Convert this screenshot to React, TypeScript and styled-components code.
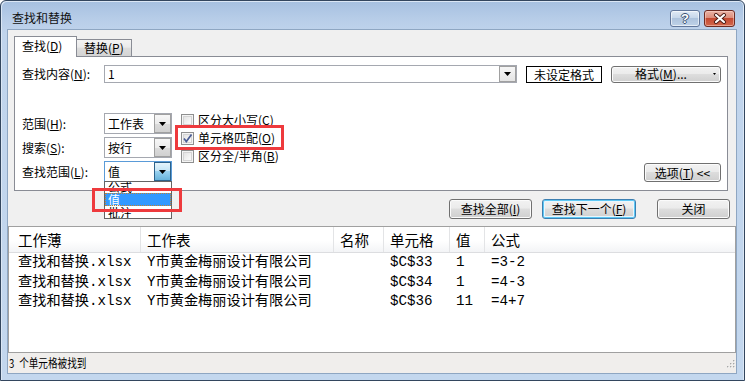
import React from 'react';
import styled, { createGlobalStyle, css } from 'styled-components';

const UI_FONT = `"Noto Sans CJK SC", "Liberation Sans", sans-serif`;
const LIST_FONT = `"Liberation Mono", "Noto Sans CJK SC", monospace`;
const COLUMNS = '132px 193px 50px 66px 35px 1fr';

const GlobalStyle = createGlobalStyle`
  * { box-sizing: border-box; }
  html, body { margin: 0; padding: 0; background: #ffffff; }
  body { font-family: ${UI_FONT}; font-size: 12px; color: #000; }
`;

const results = [
  { book: '查找和替换.xlsx', sheet: 'Y市黄金梅丽设计有限公司', name: '', cell: '$C$33', value: '1', formula: '=3-2' },
  { book: '查找和替换.xlsx', sheet: 'Y市黄金梅丽设计有限公司', name: '', cell: '$C$34', value: '1', formula: '=4-3' },
  { book: '查找和替换.xlsx', sheet: 'Y市黄金梅丽设计有限公司', name: '', cell: '$C$36', value: '11', formula: '=4+7' },
];

function Arrow() {
  return (
    <svg width="7" height="4" viewBox="0 0 7 4">
      <path d="M0 0h7L3.5 4z" fill="#000" />
    </svg>
  );
}

function App() {
  return (
    <>
      <GlobalStyle />
      <Window>
        <TitleBar>
          <Title>查找和替换</Title>
          <CaptionButtons>
            <CaptionButton>
              <HelpGlyph>?</HelpGlyph>
            </CaptionButton>
            <CaptionButton $close>
              <svg width="16" height="11" viewBox="0 0 16 11">
                <path d="M4 2l8 7M12 2l-8 7" stroke="#4a1a14" strokeWidth="4" strokeLinecap="round" />
                <path d="M4 2l8 7M12 2l-8 7" stroke="#ffffff" strokeWidth="2.2" strokeLinecap="round" />
              </svg>
            </CaptionButton>
          </CaptionButtons>
        </TitleBar>

        <Client>
          <TopArea>
            <TabStrip>
              <Tab $active>
                查找(<Key>D</Key>)
              </Tab>
              <Tab>
                替换(<Key>P</Key>)
              </Tab>
            </TabStrip>

            <Panel>
              <FindRow>
                <FieldLabel>
                  查找内容(<Key>N</Key>):
                </FieldLabel>
                <FindInput>
                  <span>1</span>
                  <InputArrow>
                    <Arrow />
                  </InputArrow>
                </FindInput>
                <FormatTag>未设定格式</FormatTag>
                <FormatButton>
                  格式(<Key>M</Key>)...
                  <SmallArrow>
                    <svg width="3" height="2" viewBox="0 0 3 2">
                      <path d="M0 0h3L1.5 2z" fill="#000" />
                    </svg>
                  </SmallArrow>
                </FormatButton>
              </FindRow>

              <OptionsArea>
                <ScopeGrid>
                  <FieldLabel>
                    范围(<Key>H</Key>):
                  </FieldLabel>
                  <Combo>
                    <ComboText>工作表</ComboText>
                    <ComboButton>
                      <Arrow />
                    </ComboButton>
                  </Combo>

                  <FieldLabel>
                    搜索(<Key>S</Key>):
                  </FieldLabel>
                  <Combo>
                    <ComboText>按行</ComboText>
                    <ComboButton>
                      <Arrow />
                    </ComboButton>
                  </Combo>

                  <FieldLabel>
                    查找范围(<Key>L</Key>):
                  </FieldLabel>
                  <Combo $open>
                    <ComboText>值</ComboText>
                    <ComboButton $pressed>
                      <Arrow />
                    </ComboButton>
                    <DropList>
                      <DropItems>
                        <DropItem>公式</DropItem>
                        <DropItem $selected>值</DropItem>
                        <DropItem>批注</DropItem>
                      </DropItems>
                    </DropList>
                    <Marker $left={-13} $top={26} $width={90} $height={24} />
                  </Combo>
                </ScopeGrid>

                <CheckColumn>
                  <CheckRow>
                    <CheckBox />
                    <span>
                      区分大小写(<Key>C</Key>)
                    </span>
                  </CheckRow>
                  <CheckRow>
                    <CheckBox $checked>
                      <svg width="11" height="11" viewBox="0 0 11 11">
                        <path d="M2 5.5l2.3 3L9.5 1.5" stroke="#4a5d95" strokeWidth="1.7" fill="none" />
                      </svg>
                    </CheckBox>
                    <span>
                      单元格匹配(<Key>O</Key>)
                    </span>
                    <Marker $left={-6} $top={-4} $width={109} $height={25} />
                  </CheckRow>
                  <CheckRow>
                    <CheckBox />
                    <span>
                      区分全/半角(<Key>B</Key>)
                    </span>
                  </CheckRow>
                </CheckColumn>

                <OptionsButton>
                  选项(<Key>T</Key>) &lt;&lt;
                </OptionsButton>
              </OptionsArea>
            </Panel>

            <ActionRow>
              <ActionButton $width={83}>
                查找全部(<Key>I</Key>)
              </ActionButton>
              <ActionButton $width={94} $default>
                查找下一个(<Key>F</Key>)
              </ActionButton>
              <ActionButton $width={73} $gap={21}>
                关闭
              </ActionButton>
            </ActionRow>
          </TopArea>

          <ResultList>
            <HeaderRow>
              <HeaderCell>工作薄</HeaderCell>
              <HeaderCell>工作表</HeaderCell>
              <HeaderCell>名称</HeaderCell>
              <HeaderCell>单元格</HeaderCell>
              <HeaderCell>值</HeaderCell>
              <HeaderCell $last>公式</HeaderCell>
            </HeaderRow>
            {results.map((r) => (
              <ResultRow key={r.cell}>
                <Cell>{r.book}</Cell>
                <Cell>{r.sheet}</Cell>
                <Cell>{r.name}</Cell>
                <Cell>{r.cell}</Cell>
                <Cell>{r.value}</Cell>
                <Cell>{r.formula}</Cell>
              </ResultRow>
            ))}
          </ResultList>

          <StatusBar>
            <StatusText>
              <StatusCount>3</StatusCount>个单元格被找到
            </StatusText>
            <svg width="10" height="10" viewBox="0 0 10 10">
              {[
                [8, 2],
                [5, 5],
                [8, 5],
                [2, 8],
                [5, 8],
                [8, 8],
              ].map(([x, y]) => (
                <g key={`${x}-${y}`}>
                  <rect x={x + 0.6} y={y + 0.6} width="1.4" height="1.4" fill="#ffffff" />
                  <rect x={x} y={y} width="1.4" height="1.4" fill="#a7a7a7" />
                </g>
              ))}
            </svg>
          </StatusBar>
        </Client>
      </Window>
    </>
  );
}

const Window = styled.div`
  width: 745px;
  height: 381px;
  display: flex;
  flex-direction: column;
  padding: 0 8px 7px 7px;
  border: 1px solid #33465e;
  border-radius: 6px 6px 0 0;
  background: linear-gradient(180deg, #a6c0e0 0px, #b7cde8 18px, #c0d4ec 32px, #c3d7ee 100%);
  box-shadow: inset 1px 1px 0 #dbe7f5, inset -1px 0 0 #dbe7f5;
  font-family: ${UI_FONT};
  font-size: 12px;
`;

const TitleBar = styled.div`
  flex: none;
  height: 29px;
  display: flex;
  justify-content: space-between;
  align-items: flex-start;
`;

const Title = styled.div`
  padding: 9px 0 0 4px;
  line-height: 16px;
  font-size: 12px;
  color: #111;
`;

const CaptionButtons = styled.div`
  display: flex;
  gap: 4px;
  margin: 9px 1px 0 0;
`;

const CaptionButton = styled.div<{ $close?: boolean }>`
  width: 30px;
  height: 17px;
  border: 1px solid #61769a;
  border-radius: 3px;
  display: flex;
  align-items: center;
  justify-content: center;
  background: linear-gradient(#e1eaf5 0%, #c7d7ea 45%, #aec3dd 50%, #bfd2e8 100%);
  box-shadow: inset 0 0 0 1px rgba(255, 255, 255, 0.6);

  ${(p) =>
    p.$close &&
    css`
      width: 31px;
      border-color: #6e2b22;
      background: linear-gradient(#eab3a6 0%, #dc8d7b 45%, #c54a32 50%, #d2684d 100%);
      box-shadow: inset 0 0 0 1px rgba(255, 220, 210, 0.5);
    `}
`;

const HelpGlyph = styled.span`
  font-family: 'Liberation Sans', sans-serif;
  font-weight: 700;
  font-size: 13px;
  line-height: 13px;
  color: #ffffff;
  text-shadow: 1px 0 0 #3b5172, -1px 0 0 #3b5172, 0 1px 0 #3b5172, 0 -1px 0 #3b5172;
`;

const Client = styled.div`
  flex: 1;
  display: flex;
  flex-direction: column;
  background: #f0f0f0;
  box-shadow: 0 0 0 1px #8ea6c2;
`;

const TopArea = styled.div`
  flex: none;
  height: 196px;
  display: flex;
  flex-direction: column;
  padding: 6px 8px 0 6px;
`;

const Key = styled.u`
  text-underline-offset: 1px;
`;

const TabStrip = styled.div`
  display: flex;
  align-items: flex-end;
  height: 21px;
  margin-bottom: -1px;
  position: relative;
  z-index: 1;
`;

const Tab = styled.div<{ $active?: boolean }>`
  border: 1px solid #898c95;
  border-bottom: none;
  white-space: nowrap;

  ${(p) =>
    p.$active
      ? css`
          width: 63px;
          height: 21px;
          padding-left: 7px;
          line-height: 18px;
          background: #ffffff;
          position: relative;
          z-index: 2;
        `
      : css`
          width: 56px;
          height: 17px;
          margin: 0 0 1px -1px;
          padding-left: 7px;
          line-height: 15px;
          background: linear-gradient(#f3f3f3 0%, #ebebeb 45%, #dddddd 50%, #d4d4d4 100%);
        `}
`;

const Panel = styled.div`
  height: 135px;
  border: 1px solid #898c95;
  background: #ffffff;
  padding: 8px 6px 9px 7px;
  display: flex;
  flex-direction: column;
`;

const FindRow = styled.div`
  display: flex;
  align-items: center;
  height: 18px;
`;

const FieldLabel = styled.label`
  width: 82px;
  flex: none;
  line-height: 16px;
  white-space: nowrap;
`;

const FindInput = styled.div`
  flex: 1;
  height: 18px;
  border: 1px solid #a5a8b0;
  background: #ffffff;
  display: flex;
  align-items: center;
  justify-content: space-between;
  padding-left: 3px;
  line-height: 14px;
`;

const InputArrow = styled.div`
  width: 17px;
  height: 16px;
  border: 1px solid #a0a0a0;
  background: linear-gradient(#f6f6f6, #e4e4e4);
  display: flex;
  align-items: center;
  justify-content: center;
`;

const FormatTag = styled.div`
  width: 76px;
  height: 17px;
  margin-left: 9px;
  border: 1px solid #000;
  line-height: 15px;
  text-align: center;
`;

const buttonFace = css`
  border: 1px solid #707070;
  border-radius: 3px;
  background: linear-gradient(#f2f2f2 0%, #ebebeb 45%, #dddddd 50%, #cfcfcf 100%);
  box-shadow: inset 0 0 0 1px #fbfbfb;
  font-family: inherit;
  font-size: 12px;
  color: #000;
  padding: 0;
  line-height: 14px;
  white-space: nowrap;
`;

const FormatButton = styled.button`
  ${buttonFace};
  position: relative;
  width: 110px;
  height: 17px;
  margin-left: 9px;
  padding-right: 10px;
`;

const SmallArrow = styled.span`
  position: absolute;
  right: 4px;
  top: 6px;
  display: flex;
`;

const OptionsArea = styled.div`
  flex: 1;
  display: flex;
  margin-top: 30px;
`;

const ScopeGrid = styled.div`
  display: grid;
  grid-template-columns: 82px 68px;
  grid-auto-rows: 21px;
  row-gap: 3px;
  align-items: center;
  align-content: start;
`;

const Combo = styled.div<{ $open?: boolean }>`
  position: relative;
  height: 21px;
  border: 1px solid ${(p) => (p.$open ? '#5a9bd8' : '#a5a8b0')};
  background: #ffffff;
  display: flex;
  align-items: stretch;
`;

const ComboText = styled.span`
  flex: 1;
  padding-left: 3px;
  line-height: 19px;
`;

const ComboButton = styled.span<{ $pressed?: boolean }>`
  width: 17px;
  border: 1px solid #a0a0a0;
  background: linear-gradient(#f7f7f7 0%, #ececec 50%, #dcdcdc 51%, #d0d0d0 100%);
  display: flex;
  align-items: center;
  justify-content: center;

  ${(p) =>
    p.$pressed &&
    css`
      border-color: #2c628b;
      background: linear-gradient(#e5f4fc 0%, #c4e5f6 45%, #98d1ef 50%, #68b3db 100%);
    `}
`;

const DropList = styled.div`
  position: absolute;
  left: -1px;
  top: 19px;
  width: 68px;
  height: 38px;
  border: 1px solid #646464;
  background: #ffffff;
  overflow: hidden;
  z-index: 5;
`;

const DropItems = styled.div`
  margin-top: -2px;
`;

const DropItem = styled.div<{ $selected?: boolean }>`
  height: 13px;
  line-height: 13px;
  padding-left: 3px;

  ${(p) =>
    p.$selected &&
    css`
      background: #3399ff;
      color: #ffffff;
      outline: 1px dotted #c8802e;
      outline-offset: -1px;
    `}
`;

const Marker = styled.div<{ $left: number; $top: number; $width: number; $height: number }>`
  position: absolute;
  left: ${(p) => p.$left}px;
  top: ${(p) => p.$top}px;
  width: ${(p) => p.$width}px;
  height: ${(p) => p.$height}px;
  border: 3px solid #ee3a3d;
  z-index: 6;
  pointer-events: none;
`;

const CheckColumn = styled.div`
  margin: -2px 0 0 9px;
  display: flex;
  flex-direction: column;
`;

const CheckRow = styled.label`
  position: relative;
  height: 18px;
  display: flex;
  align-items: center;
  gap: 4px;
  line-height: 14px;
  white-space: nowrap;
`;

const CheckBox = styled.span<{ $checked?: boolean }>`
  width: 13px;
  height: 13px;
  flex: none;
  border: 1px solid #8e8f8f;
  background: linear-gradient(135deg, #dcdcdc 0%, #f4f4f4 60%, #ffffff 100%);
  box-shadow: inset 0 0 0 1px #f4f4f4, inset 0 0 0 2px #d4d4d4;
  display: flex;
  align-items: center;
  justify-content: center;
`;

const OptionsButton = styled.button`
  ${buttonFace};
  margin-left: auto;
  align-self: flex-end;
  width: 77px;
  height: 19px;
`;

const ActionRow = styled.div`
  display: flex;
  justify-content: flex-end;
  margin: 8px -2px 0 0;
`;

const ActionButton = styled.button<{ $width: number; $gap?: number; $default?: boolean }>`
  ${buttonFace};
  width: ${(p) => p.$width}px;
  height: 20px;
  margin-left: ${(p) => p.$gap ?? 10}px;

  ${(p) =>
    p.$default &&
    css`
      border-color: #3c7fb1;
      box-shadow: inset 0 0 0 1px #5dc8f5, inset 0 0 0 2px #e9f6fd;
    `}
`;

const ResultList = styled.div`
  flex: 1;
  background: #ffffff;
  border: 1px solid #a0a0a0;
  border-bottom: none;
`;

const HeaderRow = styled.div`
  display: grid;
  grid-template-columns: ${COLUMNS};
  height: 26px;
  background: linear-gradient(#ffffff 0%, #ffffff 55%, #f3f4f6 100%);
  border-bottom: 1px solid #dcdde0;
  font-family: ${UI_FONT};
  font-size: 14.5px;
`;

const HeaderCell = styled.div<{ $last?: boolean }>`
  padding-left: 6px;
  line-height: 25px;
  border-right: ${(p) => (p.$last ? 'none' : '1px solid #e3e4e6')};
  white-space: nowrap;

  &:first-child {
    padding-left: 9px;
  }
`;

const ResultRow = styled.div`
  display: grid;
  grid-template-columns: ${COLUMNS};
  height: 19.5px;
  font-family: ${LIST_FONT};
  font-size: 14.2px;
`;

const Cell = styled.div`
  padding-left: 6px;
  line-height: 19.5px;
  white-space: nowrap;
  overflow: hidden;

  &:first-child {
    padding-left: 9px;
  }
`;

const StatusBar = styled.div`
  flex: none;
  height: 21px;
  border-top: 1px solid #a0a0a0;
  background: #f0eeec;
  display: flex;
  align-items: center;
  justify-content: space-between;
  padding: 0 1px 0 1px;
`;

const StatusText = styled.span`
  display: inline-block;
  font-size: 12px;
  line-height: 14px;
  transform: scaleX(0.8);
  transform-origin: left center;
  white-space: nowrap;
`;

const StatusCount = styled.span`
  margin-right: 6px;
`;

export default App;
